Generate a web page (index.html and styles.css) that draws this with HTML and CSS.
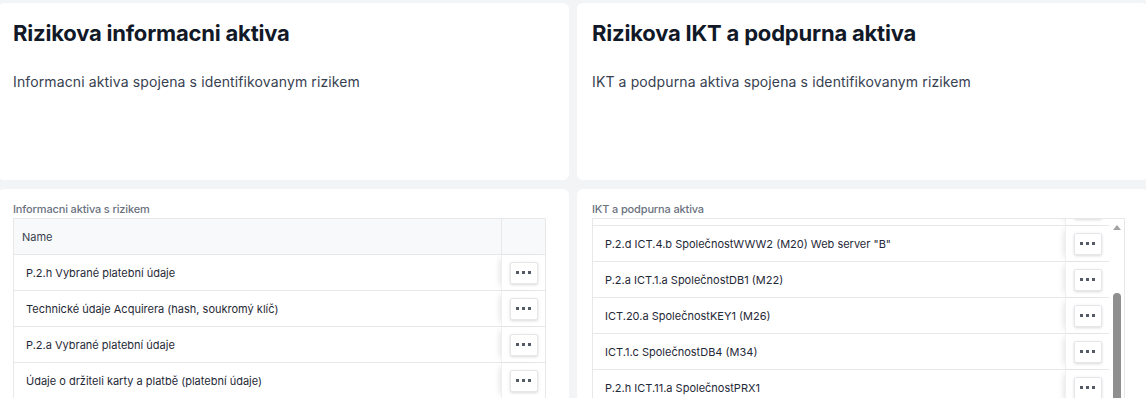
FILE: index.html
```html
<!DOCTYPE html>
<html lang="en">
<head>
    <meta charset="UTF-8">
    <meta name="viewport" content="width=device-width, initial-scale=1.0">
    <title>Rizikova aktiva</title>
    <link rel="stylesheet" href="styles.css">
</head>
<body>
    <div class="page">
        <!-- Intro cards -->
        <section class="card intro-card">
            <h2 class="card-title">Rizikova informacni aktiva</h2>
            <p class="card-text">Informacni aktiva spojena s identifikovanym rizikem</p>
        </section>

        <section class="card intro-card">
            <h2 class="card-title">Rizikova IKT a podpurna aktiva</h2>
            <p class="card-text">IKT a podpurna aktiva spojena s identifikovanym rizikem</p>
        </section>

        <!-- Information assets -->
        <section class="card list-card">
            <div class="list-label">Informacni aktiva s rizikem</div>
            <div class="grid-box">
                <div class="grid-body">
                    <div class="grid-row grid-head">
                        <div class="cell-name">Name</div>
                        <div class="cell-act"></div>
                    </div>
                    <div class="grid-row">
                        <div class="cell-name">P.2.h Vybrané platební údaje</div>
                        <div class="cell-act"><button class="dots-btn"><span></span><span></span><span></span></button></div>
                    </div>
                    <div class="grid-row">
                        <div class="cell-name">Technické údaje Acquirera (hash, soukromý klíč)</div>
                        <div class="cell-act"><button class="dots-btn"><span></span><span></span><span></span></button></div>
                    </div>
                    <div class="grid-row">
                        <div class="cell-name">P.2.a Vybrané platební údaje</div>
                        <div class="cell-act"><button class="dots-btn"><span></span><span></span><span></span></button></div>
                    </div>
                    <div class="grid-row">
                        <div class="cell-name">Údaje o držiteli karty a platbě (platební údaje)</div>
                        <div class="cell-act"><button class="dots-btn"><span></span><span></span><span></span></button></div>
                    </div>
                </div>
            </div>
        </section>

        <!-- ICT assets (scrolled list) -->
        <section class="card list-card">
            <div class="list-label">IKT a podpurna aktiva</div>
            <div class="grid-box">
                <div class="grid-body scrolled">
                    <div class="grid-row">
                        <div class="cell-name"></div>
                        <div class="cell-act"><button class="dots-btn"><span></span><span></span><span></span></button></div>
                    </div>
                    <div class="grid-row">
                        <div class="cell-name">P.2.d ICT.4.b SpolečnostWWW2 (M20) Web server "B"</div>
                        <div class="cell-act"><button class="dots-btn"><span></span><span></span><span></span></button></div>
                    </div>
                    <div class="grid-row">
                        <div class="cell-name">P.2.a ICT.1.a SpolečnostDB1 (M22)</div>
                        <div class="cell-act"><button class="dots-btn"><span></span><span></span><span></span></button></div>
                    </div>
                    <div class="grid-row">
                        <div class="cell-name">ICT.20.a SpolečnostKEY1 (M26)</div>
                        <div class="cell-act"><button class="dots-btn"><span></span><span></span><span></span></button></div>
                    </div>
                    <div class="grid-row">
                        <div class="cell-name">ICT.1.c SpolečnostDB4 (M34)</div>
                        <div class="cell-act"><button class="dots-btn"><span></span><span></span><span></span></button></div>
                    </div>
                    <div class="grid-row">
                        <div class="cell-name">P.2.h ICT.11.a SpolečnostPRX1</div>
                        <div class="cell-act"><button class="dots-btn"><span></span><span></span><span></span></button></div>
                    </div>
                </div>
                <div class="scrollbar">
                    <div class="scroll-arrow"></div>
                    <div class="scroll-thumb"></div>
                </div>
            </div>
        </section>
    </div>
</body>
</html>
```

FILE: styles.css
```css
:root {
    --page: #f3f4f6;
    --card: #fff;
    --title: #111827;
    --text: #1f2937;
    --muted: #6b7280;
    --line: #e8e8e8;
}

* {
    margin: 0;
    padding: 0;
    box-sizing: border-box;
    font-family: Inter, 'Noto Sans', sans-serif;
}

body {
    background-color: var(--page);
    color: var(--text);
    overflow: hidden;
}

.page {
    display: grid;
    grid-template-columns: 571px 571px;
    gap: 9px 8px;
    margin-left: -2px;
    padding-top: 3px;
}

.card {
    background-color: var(--card);
    border-radius: 6px;
}

.intro-card {
    height: 177px;
    padding: 18px 15px 0;
}

.card-title {
    font-size: 22px;
    font-weight: 700;
    line-height: 25px;
    color: var(--title);
    letter-spacing: -0.2px;
}

.card-text {
    margin-top: 26px;
    font-size: 14px;
    line-height: 20px;
    letter-spacing: 0.12px;
    color: #374151;
}

.list-card {
    height: 260px;
    padding: 13px 23px 0 15px;
}

.list-label {
    font-size: 11px;
    font-weight: 500;
    line-height: 14px;
    letter-spacing: -0.15px;
    color: var(--muted);
    margin-bottom: 2px;
}

.grid-box {
    display: flex;
    width: 533px;
    height: 200px;
    border: 1px solid var(--line);
    border-bottom: none;
    overflow: hidden;
}

.grid-body {
    flex: 1;
}

.grid-body.scrolled {
    margin-top: -29px;
}

.grid-row {
    display: flex;
    height: 36px;
    border-bottom: 1px solid var(--line);
    font-size: 11px;
    color: var(--text);
}

.cell-name {
    flex: 1;
    display: flex;
    align-items: center;
    padding-left: 12px;
    white-space: nowrap;
    overflow: hidden;
}

.cell-act {
    width: 44px;
    display: flex;
    align-items: center;
    justify-content: center;
    border-left: 1px solid #f0f0f0;
    box-shadow: -5px 0 6px -4px rgba(0, 0, 0, 0.12);
}

.grid-head {
    background-color: #f8f9fa;
    color: #374151;
}

.grid-head .cell-name {
    padding-left: 8px;
}

.grid-head .cell-act {
    box-shadow: none;
    border-left-color: var(--line);
}

.dots-btn {
    width: 28px;
    height: 22px;
    display: flex;
    align-items: center;
    justify-content: center;
    gap: 3px;
    background-color: #fff;
    border: 1px solid #e5e7eb;
    border-radius: 2px;
    box-shadow: 0 1px 3px rgba(0, 0, 0, 0.15);
}

.dots-btn span {
    width: 3px;
    height: 3px;
    background-color: #555b66;
}

.scrollbar {
    width: 15px;
    display: flex;
    flex-direction: column;
    align-items: center;
    padding-top: 6px;
    background-color: #fff;
}

.scroll-arrow {
    width: 0;
    height: 0;
    border-left: 4px solid transparent;
    border-right: 4px solid transparent;
    border-bottom: 5px solid #a3a3a3;
}

.scroll-thumb {
    width: 8px;
    flex: 1;
    margin-top: 63px;
    background-color: #8f8f8f;
    border-radius: 4px 4px 0 0;
}
```
